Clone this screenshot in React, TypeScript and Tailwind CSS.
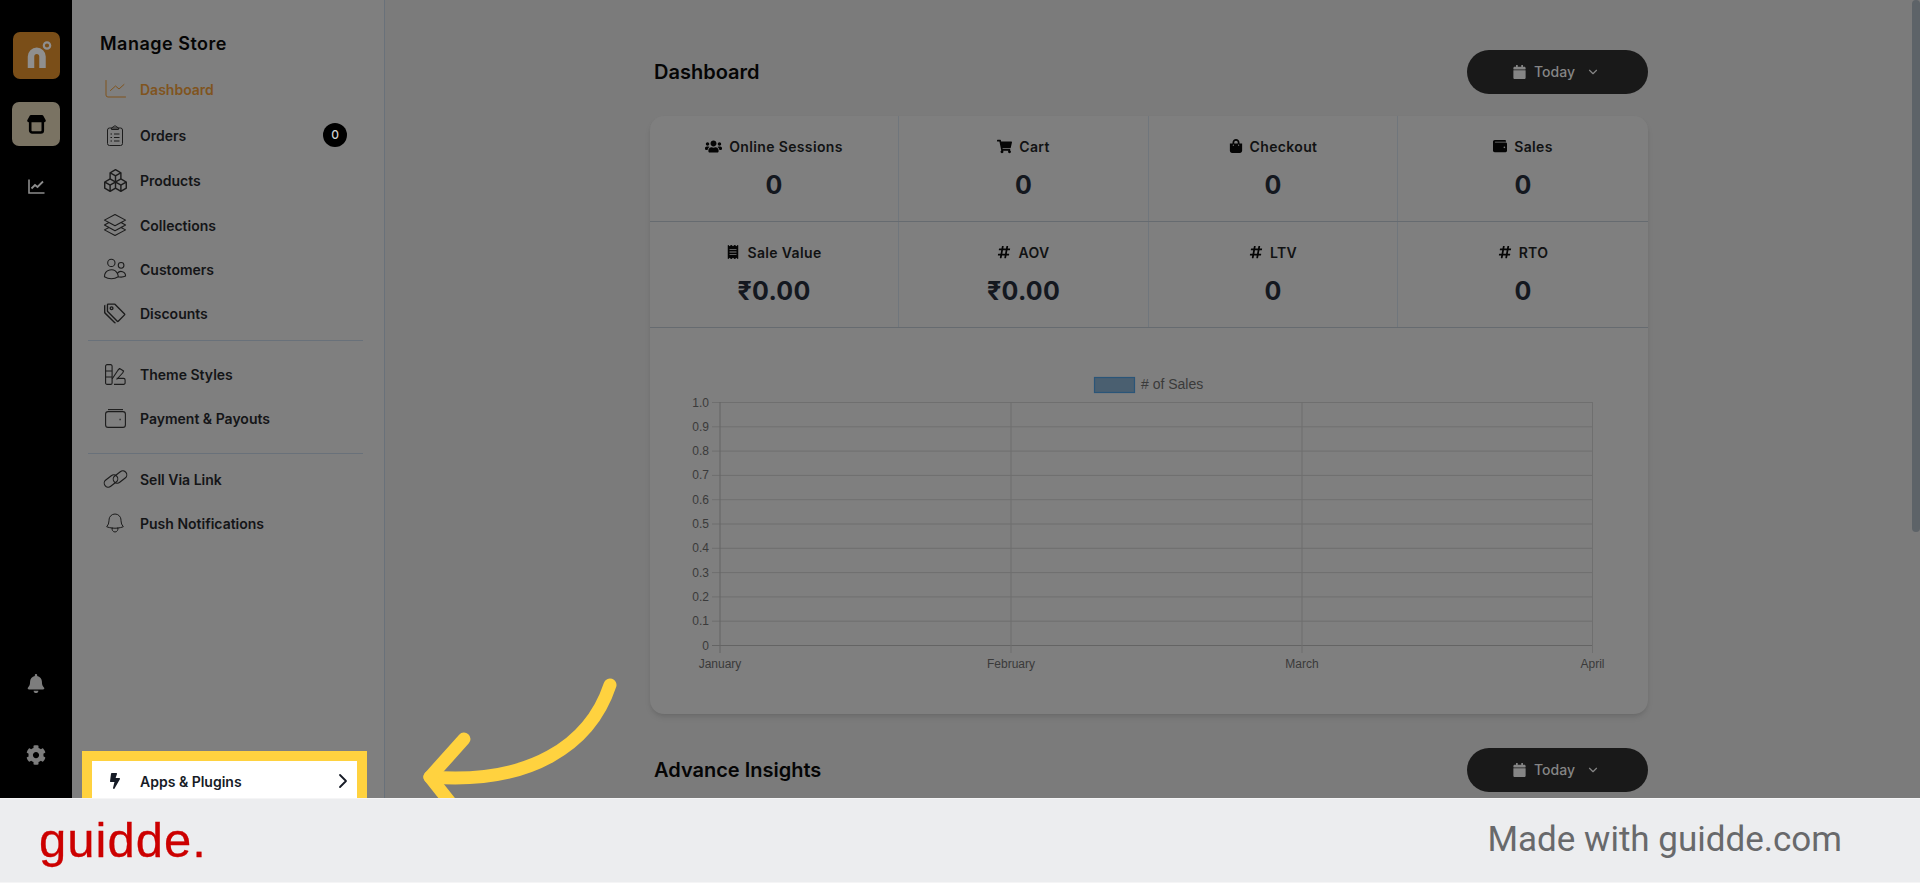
import React from "react";
import { FaUsers, FaShoppingCart, FaShoppingBag, FaWallet, FaReceipt, FaHashtag, FaCalendar, FaBell, FaCog, FaBolt } from "react-icons/fa";
import { BsBoxes, BsTags } from "react-icons/bs";
import { HiOutlineSquare3Stack3D, HiOutlineUsers, HiOutlineBell } from "react-icons/hi2";
import { LuChevronDown, LuChevronRight } from "react-icons/lu";

const inter = "font-['Inter',sans-serif]";

function DashIcon() {
  return (
    <svg width="21" height="18" viewBox="0 0 21 18" fill="none" stroke="#80541e" strokeWidth="1">
      <path d="M1 0.5V15a2 2 0 0 0 2 2h17.5" strokeLinecap="round" />
      <path d="M5.5 10.5l5-4.5 3.5 3 5-4.5" strokeLinecap="round" strokeLinejoin="round" />
    </svg>
  );
}
function ClipIcon() {
  return (
    <svg width="16" height="21" viewBox="0 0 16 21" fill="none" stroke="#1c1c1c" strokeWidth="1">
      <rect x="0.5" y="3" width="15" height="17.5" rx="2" />
      <path d="M4.5 4.5V3L8 0.7 11.5 3v1.5z" strokeLinejoin="round" />
      <path d="M3.5 9h1.5M7 9h5.5M3.5 12.5h1.5M7 12.5h5.5M3.5 16h1.5M7 16h5.5" />
    </svg>
  );
}
function SwatchIcon() {
  return (
    <svg width="21" height="21" viewBox="0 0 21 21" fill="none" stroke="#1c1c1c" strokeWidth="1.1">
      <rect x="0.6" y="0.6" width="6.5" height="19.8" rx="1.5" />
      <path d="M0.6 7h6.5M0.6 13h6.5" />
      <path d="M7.1 15l6-9 1.5-1.5 4 2.5-1 2-6 6.5M9 20.4h9.6a1.5 1.5 0 0 0 1.5-1.5v-3a1.5 1.5 0 0 0-1.5-1.5h-7" strokeLinejoin="round" />
    </svg>
  );
}
function WalletIcon() {
  return (
    <svg width="21" height="19" viewBox="0 0 21 19" fill="none" stroke="#1c1c1c" strokeWidth="1.1">
      <rect x="0.6" y="2.6" width="19.8" height="15.8" rx="2.5" />
      <path d="M3 0.6h15" />
      <path d="M14.5 10.5h1.2" strokeWidth="1.4" />
    </svg>
  );
}
function LinkIcon() {
  return (
    <svg width="25" height="18" viewBox="0 0 25 18" fill="none" stroke="#1c1c1c" strokeWidth="1.1">
      <g transform="rotate(-38 8 11)">
        <rect x="0.5" y="7" width="15" height="8" rx="4" />
      </g>
      <g transform="rotate(-38 17 7)">
        <rect x="9.5" y="3" width="15" height="8" rx="4" />
      </g>
    </svg>
  );
}
function LogoMark() {
  return (
    <svg width="47" height="47" viewBox="0 0 47 47" fill="none" stroke="#8f8f8f">
      <path d="M18 36V24.5a5.75 5.75 0 0 1 11.5 0V36" strokeWidth="6.5" />
      <circle cx="34" cy="13.5" r="3.2" strokeWidth="2.2" />
    </svg>
  );
}
function StoreIcon() {
  return (
    <svg width="19" height="19" viewBox="0 0 19 19" fill="none">
      <path d="M4 0h11a1.5 1.5 0 0 1 1.3.8L18.6 5a1.6 1.6 0 0 1-1.4 2.3H1.8A1.6 1.6 0 0 1 .4 5L2.7.8A1.5 1.5 0 0 1 4 0z" fill="#000" />
      <path d="M3.2 7v8.5a2 2 0 0 0 2 2h8.6a2 2 0 0 0 2-2V7" stroke="#000" strokeWidth="2.6" />
    </svg>
  );
}
function RailChart() {
  return (
    <svg width="17" height="15" viewBox="0 0 17 15" fill="none" stroke="#8c8c8c" strokeWidth="1.6">
      <path d="M1 0.5V14h15.5" />
      <path d="M3.5 9.5l3.5-3.5 2.5 2L15 2.5" strokeWidth="1.8" />
    </svg>
  );
}

function NavItem({ icon, label, h, active, badge }: { icon: React.ReactNode; label: string; h: string; active?: boolean; badge?: boolean }) {
  return (
    <div className={`flex items-center ${h} pl-[30px] pr-[37px]`}>
      <span className="flex w-[26px] justify-center text-[#1c1c1c]">{icon}</span>
      <span className={`ml-3 text-[14px] font-semibold ${active ? "text-[#80541e]" : "text-[#141517]"}`}>{label}</span>
      {badge && (
        <span className="ml-auto flex h-6 w-6 items-center justify-center rounded-full bg-black text-[12px] font-medium text-[#d0d0d0]">0</span>
      )}
    </div>
  );
}

function Tile({ icon, label, value }: { icon: React.ReactNode; label: string; value: string }) {
  return (
    <div className="flex h-[105px] flex-col items-center border-r border-[#70767c] pt-[20px] last:border-r-0">
      <div className="flex h-5 items-center gap-[7px] text-[14px] font-semibold tracking-[0.35px] text-[#111213]">
        <span className="text-[#050505]">{icon}</span>
        {label}
      </div>
      <div className="mt-[13px] h-8 text-[25px] leading-8 font-bold tracking-[0.3px] text-[#14181f]">{value}</div>
    </div>
  );
}

function TodayButton() {
  return (
    <div className="flex h-11 w-[181px] items-center justify-center rounded-full bg-[#191919] pr-[2px] pb-[1px] text-[14px] font-medium text-[#858585]">
      <FaCalendar className="mr-[8px] h-[14px] w-[13px]" />
      Today
      <LuChevronDown className="ml-[11px] h-[14px] w-[14px]" />
    </div>
  );
}

const yLabels = ["1.0", "0.9", "0.8", "0.7", "0.6", "0.5", "0.4", "0.3", "0.2", "0.1", "0"];
const xLabels = [
  { x: 70, t: "January" },
  { x: 361, t: "February" },
  { x: 652, t: "March" },
  { x: 942.5, t: "April" },
];

function Chart() {
  return (
    <svg width="998" height="386" viewBox="0 0 998 386" className="block" fontFamily="'Liberation Sans', sans-serif">
      <rect x="444.5" y="49.5" width="40" height="15" fill="#4a5f70" stroke="#2a5578" strokeWidth="1.2" />
      <text x="491" y="61" fontSize="14" fill="#3a3a3a">
        # of Sales
      </text>
      {yLabels.map((t, i) => {
        const y = 74.5 + i * 24.3;
        return (
          <g key={t}>
            <line x1="62" x2="942.5" y1={y} y2={y} stroke={i === 10 ? "#646464" : "#6f6f6f"} />
            <text x="59" y={y + 4} fontSize="12" textAnchor="end" fill="#3a3a3a">
              {t}
            </text>
          </g>
        );
      })}
      {xLabels.map((l, i) => (
        <g key={l.t}>
          <line x1={l.x} x2={l.x} y1="74" y2="325" stroke={i === 0 ? "#646464" : "#6f6f6f"} />
          <text x={l.x} y="340" fontSize="12" textAnchor="middle" fill="#3a3a3a">
            {l.t}
          </text>
        </g>
      ))}
    </svg>
  );
}

export default function App() {
  return (
    <div className={`flex h-[883px] w-[1920px] flex-col overflow-hidden ${inter}`}>
      <div className="relative flex h-[798px] shrink-0 overflow-hidden">
        {/* rail */}
        <div className="flex w-[72px] shrink-0 flex-col items-center bg-black pt-8">
          <div className="h-[47px] w-[47px] rounded-[7px] bg-[#7a4e18]">
            <LogoMark />
          </div>
          <div className="mt-[23px] flex h-11 w-12 items-center justify-center rounded-[7px] bg-[#7a7363]">
            <StoreIcon />
          </div>
          <div className="mt-[33px]">
            <RailChart />
          </div>
          <FaBell className="mt-auto h-[19px] w-[18px] text-[#7d7d7d]" />
          <FaCog className="mt-[52px] mb-[33px] h-5 w-5 text-[#7d7d7d]" />
        </div>

        {/* sidebar */}
        <div className="flex w-[313px] shrink-0 flex-col border-r border-[#69717a] bg-[#7f7f7f] pt-[30px]">
          <h2 className="pl-[28px] text-[18px] leading-7 font-semibold tracking-[0.5px] text-[#050505]">Manage Store</h2>
          <div className="mt-[8px]">
            <NavItem h="h-[46px]" active label="Dashboard" icon={<DashIcon />} />
            <NavItem h="h-[46px]" badge label="Orders" icon={<ClipIcon />} />
            <NavItem h="h-[45px]" label="Products" icon={<BsBoxes size={23} />} />
            <NavItem h="h-[44px]" label="Collections" icon={<HiOutlineSquare3Stack3D size={26} strokeWidth={1} />} />
            <NavItem h="h-[44px]" label="Customers" icon={<HiOutlineUsers size={28} strokeWidth={1} />} />
            <NavItem h="h-[44px]" label="Discounts" icon={<BsTags size={22} />} />
          </div>
          <div className="mt-[5px] ml-4 h-px w-[275px] bg-[#69717a]" />
          <div className="mt-[11px]">
            <NavItem h="h-[44px]" label="Theme Styles" icon={<SwatchIcon />} />
            <NavItem h="h-[44px]" label="Payment & Payouts" icon={<WalletIcon />} />
          </div>
          <div className="mt-[13px] ml-4 h-px w-[275px] bg-[#69717a]" />
          <div className="mt-[3px]">
            <NavItem h="h-[44px]" label="Sell Via Link" icon={<LinkIcon />} />
            <NavItem h="h-[44px]" label="Push Notifications" icon={<HiOutlineBell size={24} strokeWidth={1} />} />
          </div>
          <div className="mt-auto mb-[-13px] ml-[10px] flex h-[60px] w-[285px] items-center border-[10px] border-[#ffd23f] bg-white pr-[2px] pl-[15px] text-[14px] font-semibold text-[#161b26]">
            <FaBolt className="h-4 w-4 text-[#161b26]" />
            <span className="ml-[17px]">Apps &amp; Plugins</span>
            <LuChevronRight className="ml-auto h-6 w-6" strokeWidth={1.8} />
          </div>
        </div>

        {/* main */}
        <div className="min-w-0 flex-1 bg-[#7b7b7b] pt-[50px] pl-[265px]">
          <div className="flex h-11 w-[998px] items-center justify-between pl-1">
            <h1 className="text-[20px] font-semibold text-[#050505]">Dashboard</h1>
            <TodayButton />
          </div>
          <div className="mt-[22px] h-[598px] w-[998px] overflow-hidden rounded-[14px] bg-[#7f7f7f] shadow-md">
            <div className="grid grid-cols-[249px_250px_249px_1fr] border-b border-[#666b70]">
              <Tile icon={<FaUsers size={17} />} label="Online Sessions" value="0" />
              <Tile icon={<FaShoppingCart size={15} />} label="Cart" value="0" />
              <Tile icon={<FaShoppingBag size={14} />} label="Checkout" value="0" />
              <Tile icon={<FaWallet size={14} />} label="Sales" value="0" />
            </div>
            <div className="grid grid-cols-[249px_250px_249px_1fr] border-b border-[#666b70]">
              <Tile icon={<FaReceipt size={14} />} label="Sale Value" value="₹0.00" />
              <Tile icon={<FaHashtag size={14} />} label="AOV" value="₹0.00" />
              <Tile icon={<FaHashtag size={14} />} label="LTV" value="0" />
              <Tile icon={<FaHashtag size={14} />} label="RTO" value="0" />
            </div>
            <Chart />
          </div>
          <div className="mt-[34px] flex h-11 w-[998px] items-center justify-between pl-1">
            <h2 className="text-[20px] font-semibold text-[#050505]">Advance Insights</h2>
            <TodayButton />
          </div>
        </div>

        {/* page scrollbar */}
        <div className="absolute top-0 right-0 h-[532px] w-2 rounded-[5px] bg-[#5d6368]" />

        {/* annotation arrow */}
        <svg className="pointer-events-none absolute top-0 left-0" width="700" height="798" viewBox="0 0 700 798" fill="none" stroke="#ffd23f" strokeWidth="13" strokeLinecap="round" strokeLinejoin="round">
          <path d="M610 685C590 745 530 785 430 777" />
          <path d="M464 739L430 777L468 825" />
        </svg>
      </div>

      {/* footer */}
      <div className="flex h-[85px] shrink-0 items-center justify-between border-t border-b border-[#f5f5f6] bg-[#ecedef] pr-[78px] pl-[39px]">
        <span className="font-['Liberation_Sans',sans-serif] text-[49px] leading-none tracking-[1px] text-[#cc0000] [-webkit-text-stroke:0.3px_#cc0000]">guidde.</span>
        <span className="font-['Roboto',sans-serif] text-[35px] text-[#68696b]">Made with guidde.com</span>
      </div>
    </div>
  );
}
